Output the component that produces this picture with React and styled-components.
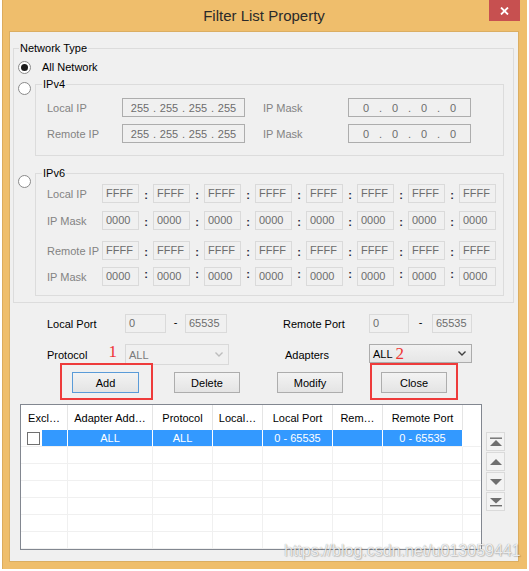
import React from 'react';
import styled, { createGlobalStyle } from 'styled-components';

const GlobalStyle = createGlobalStyle`
  body {
    margin: 0;
    background: #ffffff;
    font-family: "Liberation Sans", Arial, sans-serif;
    font-size: 11px;
    color: #000;
  }
`;

const Window = styled.div`
  position: relative;
  margin-left: 2px;
  width: 525px;
  height: 569px;
  box-sizing: border-box;
  background: #efbe6c;
  border-left: 1px solid #dcab5d;
  padding: 0 8px 7px 6px;
  display: flex;
  flex-direction: column;
`;

const TitleBar = styled.div`
  height: 31px;
  flex: none;
  display: grid;
  grid-template-columns: 1fr auto 1fr;
`;

const Title = styled.div`
  grid-column: 2;
  font-size: 15px;
  line-height: 31px;
  color: #2a2a2a;
`;

const CloseX = styled.div`
  grid-column: 3;
  justify-self: end;
  width: 31px;
  height: 21px;
  margin-right: -1px;
  background: #c75050;
  display: flex;
  align-items: center;
  justify-content: center;
`;

const Client = styled.div`
  flex: 1;
  background: #f0f0f0;
  border: 1px solid #dbae62;
  display: flex;
  flex-direction: column;
`;

const Group = styled.fieldset`
  margin: ${(p) => p.$margin};
  padding: ${(p) => p.$padding};
  border: 1px solid #dcdcdc;
  min-width: 0;
  flex: ${(p) => (p.$grow ? 1 : 'none')};
`;

const Legend = styled.legend`
  padding: 0 1px;
  margin-left: ${(p) => p.$offset}px;
  line-height: 14px;
  color: #000;
`;

const RadioRow = styled.div`
  display: flex;
  align-items: ${(p) => (p.$top ? 'flex-start' : 'center')};
  margin-top: ${(p) => p.$mt}px;
`;

const Radio = styled.span`
  flex: none;
  width: 13px;
  height: 13px;
  box-sizing: border-box;
  border: 1px solid #8a8a8a;
  border-radius: 50%;
  background: #fff;
  display: flex;
  align-items: center;
  justify-content: center;
  margin-top: ${(p) => p.$top || 0}px;
  margin-right: ${(p) => p.$gap}px;

  &::after {
    content: '';
    width: 7px;
    height: 7px;
    border-radius: 50%;
    background: ${(p) => (p.$checked ? '#1c1c1c' : 'transparent')};
  }
`;

const RadioText = styled.span`
  line-height: 13px;
`;

const V4Grid = styled.div`
  display: grid;
  grid-template-columns: 75px 123px 103px 123px;
  grid-auto-rows: 19px;
  row-gap: 7px;
  align-items: center;
  margin: 7px 0 0 11px;
`;

const V6Grid = styled.div`
  display: grid;
  grid-template-columns: 55px repeat(7, 37px 14px) 37px;
  grid-auto-rows: 19px;
  row-gap: ${(p) => p.$gap}px;
  align-items: center;
  margin: ${(p) => p.$mt}px 0 0 11px;
`;

const GrayLabel = styled.span`
  color: #838383;
  white-space: nowrap;
  padding-left: ${(p) => p.$indent || 0}px;
`;

const IpBox = styled.div`
  height: 19px;
  box-sizing: border-box;
  border: 1px solid #adadad;
  background: #f0f0f0;
  color: #6d6d6d;
  display: flex;
  justify-content: center;
  align-items: center;
`;

const Octet = styled.span`
  width: 20px;
  text-align: center;
`;

const Dot = styled.span`
  width: 9px;
  text-align: center;
`;

const HexBox = styled.div`
  height: 19px;
  box-sizing: border-box;
  border: 1px solid #dadada;
  background: #f0f0f0;
  color: #6d6d6d;
  padding-left: 3px;
  line-height: 17px;
`;

const Colon = styled.span`
  text-align: center;
  font-weight: bold;
  color: #26263a;
  position: relative;
  top: ${(p) => (p.$raised ? -3 : 1)}px;
`;

const Section = styled.div`
  padding-left: 37px;
`;

const PortGrid = styled.div`
  display: grid;
  grid-template-columns: 78px 41px 19px 42px 56px 86px 40px 23px 40px;
  grid-template-rows: 19px 21px;
  row-gap: 11px;
  align-items: center;
  margin-top: 11px;
`;

const Label = styled.div`
  grid-column: ${(p) => p.$col};
  display: flex;
  justify-content: space-between;
  align-items: center;
  padding-right: 8px;
  color: #000;
  white-space: nowrap;
  align-self: stretch;
`;

const Mark = styled.span`
  font-family: "Liberation Serif", "Times New Roman", serif;
  font-size: 17px;
  line-height: 1;
  color: #ef3333;
  align-self: flex-start;
  margin-top: -1px;
`;

const PortBox = styled.div`
  grid-column: ${(p) => p.$col};
  height: 19px;
  box-sizing: border-box;
  border: 1px solid #dadada;
  background: #f0f0f0;
  color: #6d6d6d;
  padding-left: 3px;
  line-height: 17px;
`;

const Dash = styled.span`
  grid-column: ${(p) => p.$col};
  text-align: center;
  position: relative;
  top: -2px;
`;

const Combo = styled.div`
  grid-column: ${(p) => p.$col};
  width: ${(p) => p.$w}px;
  height: ${(p) => p.$h}px;
  align-self: start;
  box-sizing: border-box;
  border: 1px solid ${(p) => (p.$disabled ? '#d9d9d9' : '#acacac')};
  background: ${(p) => (p.$disabled ? '#f0f0f0' : 'linear-gradient(#f2f2f2, #e6e6e6)')};
  color: ${(p) => (p.$disabled ? '#7a7a7a' : '#000')};
  display: flex;
  align-items: center;
  justify-content: space-between;
  padding: 0 5px 0 3px;
`;

const ComboValue = styled.span`
  display: flex;
  align-items: center;
  gap: 3px;
`;

const ButtonRow = styled.div`
  display: flex;
  align-items: flex-start;
  margin: -2px 0 0 13px;
`;

const RedFrame = styled.div`
  border: 2px solid #ee3b3b;
  padding: 7px ${(p) => p.$right}px 5px ${(p) => p.$left}px;
  margin-left: ${(p) => p.$ml || 0}px;
`;

const Button = styled.div`
  width: ${(p) => p.$w}px;
  height: 21px;
  box-sizing: border-box;
  border: 1px solid ${(p) => (p.$focus ? '#5a9bd8' : '#adadad')};
  background: linear-gradient(#f3f3f3, #e4e4e4);
  display: flex;
  align-items: center;
  justify-content: center;
  margin-left: ${(p) => p.$ml || 0}px;
  margin-top: ${(p) => p.$mt || 0}px;
`;

const TableArea = styled.div`
  display: flex;
  align-items: flex-start;
  gap: 4px;
  margin: 4px 0 0 10px;
`;

const Table = styled.div`
  width: 462px;
  height: 146px;
  box-sizing: border-box;
  border: 1px solid #828790;
  background: #fff;
  display: grid;
  grid-template-columns: 47px 85px 60px 50px 70px 50px 80px 18px;
  grid-template-rows: 25px repeat(7, 17px);
`;

const HeadCell = styled.div`
  box-sizing: border-box;
  border-right: 1px solid ${(p) => (p.$last ? 'transparent' : '#e5e5e5')};
  display: flex;
  align-items: center;
  justify-content: center;
  white-space: nowrap;
  overflow: hidden;
`;

const Cell = styled.div`
  box-sizing: border-box;
  border-right: 1px solid ${(p) => (p.$last ? 'transparent' : p.$selected ? '#ffffff' : '#f0f0f0')};
  border-bottom: 1px solid #f0f0f0;
  background: ${(p) => (p.$selected ? '#3399ff' : '#fff')};
  color: #fff;
  display: flex;
  align-items: center;
  justify-content: center;
  white-space: nowrap;
`;

const CheckCell = styled.div`
  box-sizing: border-box;
  border-right: 1px solid #ffffff;
  border-bottom: 1px solid #f0f0f0;
  display: flex;
  align-items: center;
  padding-left: 6px;
`;

const CheckBox = styled.span`
  flex: none;
  width: 13px;
  height: 13px;
  box-sizing: border-box;
  border: 1px solid #707070;
  background: #fff;
`;

const Highlight = styled.span`
  flex: 1;
  align-self: stretch;
  margin-left: 2px;
  background: #3399ff;
`;

const NavColumn = styled.div`
  display: flex;
  flex-direction: column;
  gap: 1px;
  margin-top: 28px;
`;

const NavButton = styled.div`
  width: 19px;
  height: 19px;
  box-sizing: border-box;
  border: 1px solid #dadada;
  background: #f3f3f3;
  display: flex;
`;

const Watermark = styled.div`
  position: absolute;
  left: 281px;
  top: 541px;
  font-size: 16px;
  line-height: 20px;
  color: rgba(255, 255, 255, 0.85);
  text-shadow: 0 0 1px rgba(0, 0, 0, 0.45), 1px 1px 1px rgba(0, 0, 0, 0.15);
  white-space: nowrap;
`;

const Chevron = ({ color }) => (
  <svg width="8" height="5" viewBox="0 0 8 5">
    <polyline points="0.5,0.5 4,4 7.5,0.5" fill="none" stroke={color} strokeWidth="1.4" />
  </svg>
);

const NavIcon = ({ kind }) => (
  <svg width="17" height="17" viewBox="0 0 17 17">
    {kind === 'top' && (
      <>
        <rect x="3" y="4.5" width="12" height="1.4" fill="#6f6f6f" />
        <polygon points="9,7 15,13 3,13" fill="#6f6f6f" />
      </>
    )}
    {kind === 'up' && <polygon points="9,6 15,12 3,12" fill="#6f6f6f" />}
    {kind === 'down' && <polygon points="3,6 15,6 9,12" fill="#6f6f6f" />}
    {kind === 'bottom' && (
      <>
        <polygon points="3,5 15,5 9,10.5" fill="#6f6f6f" />
        <rect x="3" y="12" width="12" height="1.4" fill="#6f6f6f" />
      </>
    )}
  </svg>
);

const IpField = ({ parts }) => (
  <IpBox>
    {parts.map((p, i) => (
      <React.Fragment key={i}>
        {i > 0 && <Dot>.</Dot>}
        <Octet>{p}</Octet>
      </React.Fragment>
    ))}
  </IpBox>
);

const HexRow = ({ label, value, raised }) => (
  <>
    <GrayLabel>{label}</GrayLabel>
    {Array.from({ length: 8 }).map((_, i) => (
      <React.Fragment key={i}>
        {i > 0 && <Colon $raised={raised}>:</Colon>}
        <HexBox>{value}</HexBox>
      </React.Fragment>
    ))}
  </>
);

const columns = ['Excl…', 'Adapter Add…', 'Protocol', 'Local…', 'Local Port', 'Rem…', 'Remote Port', ''];
const selectedRow = ['ALL', 'ALL', '', '0 - 65535', '', '0 - 65535', ''];

const App = () => {
  return (
    <>
      <GlobalStyle />
      <Window>
        <TitleBar>
          <Title>Filter List Property</Title>
          <CloseX>
            <svg width="9" height="8" viewBox="0 0 9 8">
              <path d="M1 0.5 L8 7.5 M8 0.5 L1 7.5" stroke="#fff" strokeWidth="1.8" />
            </svg>
          </CloseX>
        </TitleBar>

        <Client>
          <Group $margin="9px 4px 0 3px" $padding="0 0 6px 4px">
            <Legend $offset={1}>Network Type</Legend>

            <RadioRow $mt={6}>
              <Radio $checked $gap={11} />
              <RadioText>All Network</RadioText>
            </RadioRow>

            <RadioRow $mt={3} $top>
              <Radio $top={5} $gap={4} />
              <Group $grow $margin="0 9px 0 0" $padding="0 0 12px 0">
                <Legend $offset={6}>IPv4</Legend>
                <V4Grid>
                  <GrayLabel>Local IP</GrayLabel>
                  <IpField parts={['255', '255', '255', '255']} />
                  <GrayLabel $indent={18}>IP Mask</GrayLabel>
                  <IpField parts={['0', '0', '0', '0']} />
                  <GrayLabel>Remote IP</GrayLabel>
                  <IpField parts={['255', '255', '255', '255']} />
                  <GrayLabel $indent={18}>IP Mask</GrayLabel>
                  <IpField parts={['0', '0', '0', '0']} />
                </V4Grid>
              </Group>
            </RadioRow>

            <RadioRow $mt={10} $top>
              <Radio $top={9} $gap={4} />
              <Group $grow $margin="0 9px 0 0" $padding="0 0 9px 0">
                <Legend $offset={6}>IPv6</Legend>
                <V6Grid $mt={4} $gap={8}>
                  <HexRow label="Local IP" value="FFFF" />
                  <HexRow label="IP Mask" value="0000" />
                </V6Grid>
                <V6Grid $mt={11} $gap={7}>
                  <HexRow label="Remote IP" value="FFFF" />
                  <HexRow label="IP Mask" value="0000" raised />
                </V6Grid>
              </Group>
            </RadioRow>
          </Group>

          <Section>
            <PortGrid>
              <Label $col={1}>Local Port</Label>
              <PortBox $col={2}>0</PortBox>
              <Dash $col={3}>-</Dash>
              <PortBox $col={4}>65535</PortBox>
              <Label $col={6}>Remote Port</Label>
              <PortBox $col={7}>0</PortBox>
              <Dash $col={8}>-</Dash>
              <PortBox $col={9}>65535</PortBox>

              <Label $col={1}>
                <span>Protocol</span>
                <Mark>1</Mark>
              </Label>
              <Combo $col="2 / 5" $w={104} $h={21} $disabled>
                <ComboValue>ALL</ComboValue>
                <Chevron color="#bdbdbd" />
              </Combo>
              <Label $col={6}>
                <span style={{ paddingLeft: 2 }}>Adapters</span>
              </Label>
              <Combo $col="7 / 10" $w={103} $h={19}>
                <ComboValue>
                  ALL<Mark>2</Mark>
                </ComboValue>
                <Chevron color="#404040" />
              </Combo>
            </PortGrid>

            <ButtonRow>
              <RedFrame $left={10} $right={12}>
                <Button $w={67} $focus>Add</Button>
              </RedFrame>
              <Button $w={66} $ml={21} $mt={9}>Delete</Button>
              <Button $w={66} $ml={37} $mt={9}>Modify</Button>
              <RedFrame $left={9} $right={9} $ml={27}>
                <Button $w={66}>Close</Button>
              </RedFrame>
            </ButtonRow>
          </Section>

          <TableArea>
            <Table>
              {columns.map((c, i) => (
                <HeadCell key={c + i} $last={i === columns.length - 1}>
                  {c}
                </HeadCell>
              ))}

              <CheckCell>
                <CheckBox />
                <Highlight />
              </CheckCell>
              {selectedRow.map((v, i) => (
                <Cell key={'s' + i} $selected={i < selectedRow.length - 1} $last={i === selectedRow.length - 1}>
                  {v}
                </Cell>
              ))}

              {Array.from({ length: 6 * 8 }).map((_, i) => (
                <Cell key={'e' + i} $last={i % 8 === 7} />
              ))}
            </Table>

            <NavColumn>
              <NavButton><NavIcon kind="top" /></NavButton>
              <NavButton><NavIcon kind="up" /></NavButton>
              <NavButton><NavIcon kind="down" /></NavButton>
              <NavButton><NavIcon kind="bottom" /></NavButton>
            </NavColumn>
          </TableArea>
        </Client>

        <Watermark>https://blog.csdn.net/u013059441</Watermark>
      </Window>
    </>
  );
};

export default App;
